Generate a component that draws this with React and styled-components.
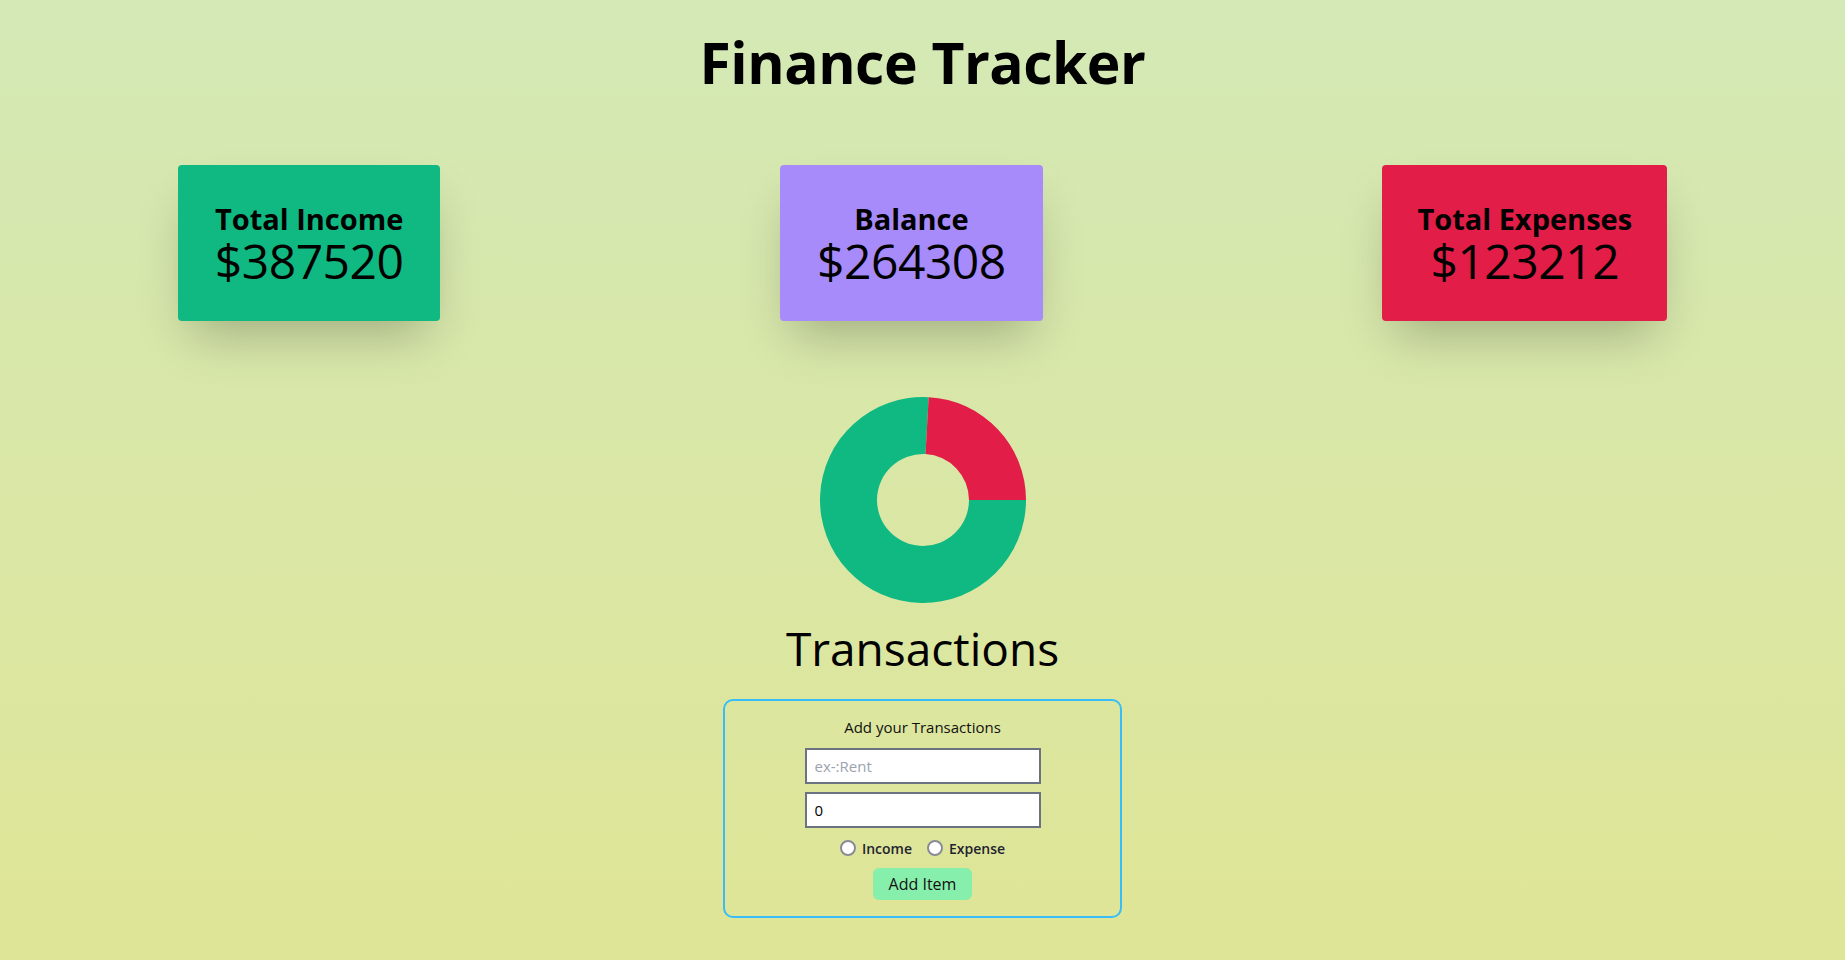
import React from "react";
import styled, { createGlobalStyle } from "styled-components";

const GlobalStyle = createGlobalStyle`
  html {
    min-height: 100%;
    background: linear-gradient(to bottom, #d4e9b6 0%, #dfe596 100%);
    background-attachment: fixed;
  }
  body {
    margin: 8px;
    font-family: "Open Sans", "Noto Sans", sans-serif;
    color: #000;
  }
  * { box-sizing: border-box; }
`;

const Page = styled.div`
  padding-top: 24px;
  display: flex;
  flex-direction: column;
`;

const Title = styled.h1`
  margin: 0;
  text-align: center;
  font-size: 57px;
  line-height: 60px;
  font-weight: 700;
  letter-spacing: -0.5px;
`;

const CardsRow = styled.div`
  margin-top: 73px;
  display: flex;
  justify-content: space-around;
  align-items: flex-start;
`;

const Card = styled.div`
  background: ${(p) => p.$bg};
  border-radius: 4px;
  padding: 36px ${(p) => p.$px}px 36px;
  text-align: center;
  box-shadow: 0 25px 50px -12px rgba(0, 0, 0, 0.25);
`;

const CardLabel = styled.div`
  font-size: 29px;
  line-height: 36px;
  font-weight: 700;
  white-space: nowrap;
`;

const CardAmount = styled.div`
  font-size: 48px;
  line-height: 48px;
  font-weight: 400;
  letter-spacing: -0.5px;
`;

const ChartWrap = styled.div`
  margin-top: 76px;
  display: flex;
  justify-content: center;
`;

const Heading = styled.h2`
  margin: 21px 0 0;
  text-align: center;
  font-size: 46px;
  line-height: 48px;
  font-weight: 400;
`;

const Form = styled.form`
  align-self: center;
  margin-top: 27px;
  width: 399px;
  height: 219px;
  border: 2px solid #38bdf8;
  border-radius: 10px;
  padding-top: 14px;
  display: flex;
  flex-direction: column;
  align-items: center;
  gap: 8px;
`;

const FormTitle = styled.div`
  font-size: 15px;
  line-height: 25px;
  color: #111;
`;

const Input = styled.input`
  width: 236px;
  height: 36px;
  border: 2px solid #6b7280;
  background: #fff;
  padding: 0 8px;
  font-family: "Open Sans", sans-serif;
  font-size: 15px;
  color: #000;
  outline: none;
  &::placeholder {
    color: #9ca3af;
  }
`;

const RadioRow = styled.div`
  height: 24px;
  display: flex;
  align-items: center;
  gap: 15px;
`;

const RadioLabel = styled.label`
  display: flex;
  align-items: center;
  gap: 6px;
  font-size: 14px;
  font-weight: 600;
  color: #1f2330;
`;

const Radio = styled.input`
  appearance: none;
  margin: 0;
  width: 16px;
  height: 16px;
  border-radius: 50%;
  border: 2px solid #8b8b98;
  background: #fff;
`;

const Button = styled.button`
  height: 32px;
  padding: 0 16px;
  border: none;
  border-radius: 6px;
  background: #86efac;
  font-family: "Open Sans", sans-serif;
  font-size: 16px;
  color: #111;
`;

function Donut() {
  const size = 206;
  const c = size / 2;
  const R = 103;
  const r = 46;
  const income = 387520;
  const expense = 123212;
  const start = (90 - (expense / (income + expense)) * 360) * (Math.PI / 180);
  const ox = c + R * Math.sin(start);
  const oy = c - R * Math.cos(start);
  const ix = c + r * Math.sin(start);
  const iy = c - r * Math.cos(start);
  const red = `M ${ox} ${oy} A ${R} ${R} 0 0 1 ${c + R} ${c} L ${c + r} ${c} A ${r} ${r} 0 0 0 ${ix} ${iy} Z`;
  const green = `M ${c + R} ${c} A ${R} ${R} 0 1 1 ${ox} ${oy} L ${ix} ${iy} A ${r} ${r} 0 1 0 ${c + r} ${c} Z`;
  return (
    <svg width={size} height={size} viewBox={`0 0 ${size} ${size}`}>
      <path d={green} fill="#10b981" />
      <path d={red} fill="#e11d48" />
    </svg>
  );
}

export default function App() {
  return (
    <>
      <GlobalStyle />
      <Page>
        <Title>Finance Tracker</Title>
        <CardsRow>
          <Card $bg="#10b981" $px={37}>
            <CardLabel>Total Income</CardLabel>
            <CardAmount>$387520</CardAmount>
          </Card>
          <Card $bg="#a78bfa" $px={37}>
            <CardLabel>Balance</CardLabel>
            <CardAmount>$264308</CardAmount>
          </Card>
          <Card $bg="#e11d48" $px={35}>
            <CardLabel>Total Expenses</CardLabel>
            <CardAmount>$123212</CardAmount>
          </Card>
        </CardsRow>
        <ChartWrap>
          <Donut />
        </ChartWrap>
        <Heading>Transactions</Heading>
        <Form onSubmit={(e) => e.preventDefault()}>
          <FormTitle>Add your Transactions</FormTitle>
          <Input type="text" placeholder="ex-:Rent" />
          <Input type="number" defaultValue="0" />
          <RadioRow>
            <RadioLabel>
              <Radio type="radio" name="kind" value="income" />
              Income
            </RadioLabel>
            <RadioLabel>
              <Radio type="radio" name="kind" value="expense" />
              Expense
            </RadioLabel>
          </RadioRow>
          <Button type="submit">Add Item</Button>
        </Form>
      </Page>
    </>
  );
}
